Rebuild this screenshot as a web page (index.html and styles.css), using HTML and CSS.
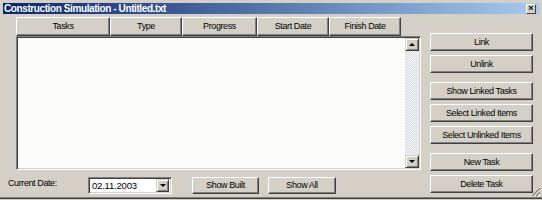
FILE: index.html
```html
<!DOCTYPE html>
<html>
<head>
<meta charset="utf-8">
<link rel="stylesheet" href="styles.css">
</head>
<body>
<div class="window">
  <div class="titlebar">
    <span class="title">Construction Simulation - Untitled.txt</span>
    <span class="close">×</span>
  </div>
  <div class="client">
    <div class="leftcol">
      <div class="headers">
        <div class="hdr w-tasks">Tasks</div>
        <div class="hdr w-type">Type</div>
        <div class="hdr w-progress">Progress</div>
        <div class="hdr w-start">Start Date</div>
        <div class="hdr w-finish">Finish Date</div>
      </div>
      <div class="listbox">
        <div class="listarea"></div>
        <div class="vscroll">
          <div class="sbtn"><span class="tri-up"></span></div>
          <div class="track"></div>
          <div class="sbtn"><span class="tri-down"></span></div>
        </div>
      </div>
      <div class="bottomrow">
        <span class="label">Current Date:</span>
        <div class="combo">
          <span class="combo-text">02.11.2003</span>
          <div class="sbtn combo-btn"><span class="tri-down"></span></div>
        </div>
        <div class="btn w-built">Show Built</div>
        <div class="btn w-all">Show All</div>
      </div>
    </div>
    <div class="rightcol">
      <div class="btn">Link</div>
      <div class="btn">Unlink</div>
      <div class="btn group">Show Linked Tasks</div>
      <div class="btn">Select Linked Items</div>
      <div class="btn">Select Unlinked Items</div>
      <div class="btn group">New Task</div>
      <div class="btn">Delete Task</div>
    </div>
  </div>
  <svg class="grip" width="11" height="11" viewBox="0 0 11 11">
    <path d="M10 1 L1 10 M10 5 L5 10 M10 9 L9 10" stroke="#ffffff" stroke-width="1"/>
    <path d="M10 2 L2 10 M10 6 L6 10" stroke="#808080" stroke-width="1.2"/>
  </svg>
</div>
</body>
</html>
```

FILE: styles.css
```css
html, body {
  margin: 0;
  padding: 0;
  background: #d4d0c8;
}
body {
  font-family: "Liberation Sans", Arial, sans-serif;
  font-size: 9px;
  letter-spacing: -0.4px;
  color: #000;
}
.window {
  position: relative;
  width: 542px;
  height: 199px;
  box-sizing: border-box;
  background: #d4d0c8;
  padding-top: 3px;
  border-bottom: 1px solid #404040;
  box-shadow: inset 0 -1px 0 #808080;
}
.titlebar {
  height: 11px;
  margin: 0 3px;
  background: linear-gradient(to right, #0a246a, #a6caf0);
  display: flex;
  align-items: center;
  padding: 0 3px 0 1px;
}
.title {
  color: #fff;
  font-weight: bold;
  font-size: 10px;
  letter-spacing: -0.4px;
  line-height: 11px;
}
.close {
  margin-left: auto;
  width: 8px;
  height: 8px;
  background: #d4d0c8;
  border: 1px solid;
  border-color: #fff #404040 #404040 #fff;
  font-size: 9px;
  line-height: 7px;
  text-align: center;
  letter-spacing: 0;
  font-weight: bold;
}
.client {
  display: flex;
  padding-left: 8px;
}
.leftcol {
  display: flex;
  flex-direction: column;
  width: 413px;
  padding-top: 3px;
}
.headers {
  display: flex;
  margin-left: 8px;
  height: 19px;
}
.hdr {
  box-sizing: border-box;
  height: 19px;
  border: 1px solid;
  border-color: #fff #404040 #404040 #fff;
  box-shadow: inset -1px -1px 0 #808080;
  display: flex;
  align-items: center;
  justify-content: center;
  padding-bottom: 1px;
}
.w-tasks { width: 94px; }
.w-type { width: 72px; }
.w-progress { width: 75px; }
.w-start { width: 72px; }
.w-finish { width: 72px; }
.listbox {
  margin-left: 8px;
  width: 405px;
  height: 134px;
  box-sizing: border-box;
  border: 1px solid;
  border-color: #808080 #fff #fff #808080;
  box-shadow: inset 1px 1px 0 #404040, inset -1px -1px 0 #d4d0c8;
  padding: 1px;
  display: flex;
  background: #fcfdfb;
}
.listarea {
  flex: 1;
}
.vscroll {
  width: 14px;
  display: flex;
  flex-direction: column;
  background: repeating-conic-gradient(#ffffff 0 25%, #d2d6de 0 50%) 0 0 / 2px 2px;
}
.track {
  flex: 1;
}
.sbtn {
  box-sizing: border-box;
  width: 14px;
  height: 13px;
  background: #d4d0c8;
  border: 1px solid;
  border-color: #d4d0c8 #404040 #404040 #d4d0c8;
  box-shadow: inset 1px 1px 0 #fff, inset -1px -1px 0 #808080;
  display: flex;
  align-items: center;
  justify-content: center;
}
.tri-up {
  width: 0;
  height: 0;
  border-left: 3px solid transparent;
  border-right: 3px solid transparent;
  border-bottom: 3px solid #000;
}
.tri-down {
  width: 0;
  height: 0;
  border-left: 3px solid transparent;
  border-right: 3px solid transparent;
  border-top: 3px solid #000;
}
.bottomrow {
  display: flex;
  align-items: center;
  margin-top: 7px;
  height: 17px;
}
.label {
  width: 80px;
  padding-top: 1px;
  align-self: flex-start;
}
.combo {
  box-sizing: border-box;
  width: 84px;
  height: 17px;
  background: #fff;
  border: 1px solid;
  border-color: #808080 #fff #fff #808080;
  box-shadow: inset 1px 1px 0 #404040, inset -1px -1px 0 #d4d0c8;
  display: flex;
  align-items: center;
  padding: 1px 2px 1px 3px;
}
.combo-text {
  flex: 1;
  font-size: 9.5px;
  letter-spacing: -0.2px;
}
.combo-btn {
  width: 13px;
  height: 13px;
}
.btn {
  box-sizing: border-box;
  height: 18px;
  background: #d4d0c8;
  border: 1px solid;
  border-color: #fff #404040 #404040 #fff;
  box-shadow: inset -1px -1px 0 #808080;
  display: flex;
  align-items: center;
  justify-content: center;
  padding-bottom: 1px;
}
.w-built {
  width: 67px;
  margin-left: 20px;
  height: 17px;
}
.w-all {
  width: 68px;
  margin-left: 9px;
  height: 17px;
}
.rightcol {
  display: flex;
  flex-direction: column;
  gap: 4px;
  width: 103px;
  margin-left: 9px;
  padding-top: 19px;
}
.rightcol .group {
  margin-top: 5px;
}
.grip {
  position: absolute;
  right: 1px;
  bottom: 1px;
}
```
